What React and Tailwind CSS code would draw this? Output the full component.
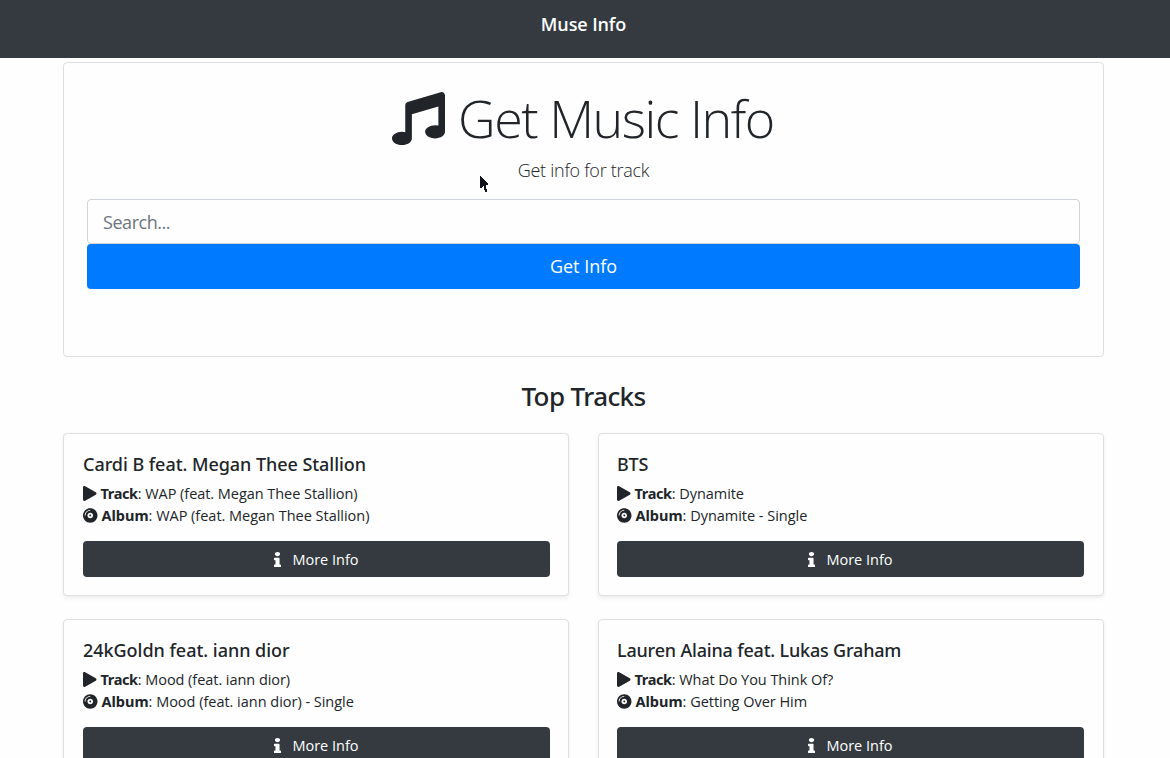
import { FaCompactDisc, FaInfo, FaMusic, FaPlay } from "react-icons/fa";

const tracks = [
  {
    artist: "Cardi B feat. Megan Thee Stallion",
    track: "WAP (feat. Megan Thee Stallion)",
    album: "WAP (feat. Megan Thee Stallion)",
    tracking: "tracking-[-0.05px]",
  },
  { artist: "BTS", track: "Dynamite", album: "Dynamite - Single", tracking: "tracking-[-0.2px]" },
  {
    artist: "24kGoldn feat. iann dior",
    track: "Mood (feat. iann dior)",
    album: "Mood (feat. iann dior) - Single",
    tracking: "tracking-[-0.03px]",
  },
  {
    artist: "Lauren Alaina feat. Lukas Graham",
    track: "What Do You Think Of?",
    album: "Getting Over Him",
    tracking: "tracking-[-0.19px]",
  },
];

function TrackCard({ artist, track, album, tracking }) {
  return (
    <article className="h-[163px] rounded-[4px] border border-[#dfdfdf] bg-[#fefefe] px-[19px] pt-[19px] shadow-[0_2px_4px_rgba(0,0,0,0.075)] even:pl-[18px]">
      <h5
        className={`mb-[7px] h-[22px] font-['Noto_Sans',sans-serif] text-[18px] leading-[22px] font-medium whitespace-nowrap ${tracking}`}
      >
        {artist}
      </h5>
      <div className="mb-[15px] text-[14.5px] leading-[22px] whitespace-nowrap">
        <p className="flex h-[22px] items-center">
          <FaPlay className="mr-[4px] h-[15px] w-[13.5px]" preserveAspectRatio="none" />
          <strong className="font-['Noto_Sans',sans-serif] font-bold tracking-[-0.35px]">Track</strong>
          <span className="pt-[2px] tracking-[-0.05px]">: {track}</span>
        </p>
        <p className="flex h-[22px] items-center">
          <FaCompactDisc className="mr-[4px] h-[15px] w-[14.5px]" />
          <strong className="font-['Noto_Sans',sans-serif] font-bold">Album</strong>
          <span className="pt-[2px] tracking-[-0.02px]">: {album}</span>
        </p>
      </div>
      <button className="flex h-[36px] w-[467px] items-center justify-center rounded-[4px] bg-[#343a40] text-[14.5px] text-white">
        <FaInfo className="mr-[11px] h-[15px] w-[7px]" preserveAspectRatio="none" />
        <span className="pt-[2px]">More Info</span>
      </button>
    </article>
  );
}

function Cursor() {
  return (
    <svg
      className="absolute top-[175px] left-[479px] h-[18px] w-[11px]"
      viewBox="0 0 11 18"
      fill="#10131a"
      shapeRendering="crispEdges"
      aria-hidden="true"
    >
      <path d="M1 1v12h1l2-2 1 1v2l1 2v1h2v-2l-1-2v-2l-1-1h3V9z" />
    </svg>
  );
}

export default function App() {
  return (
    <div className="relative h-[758px] overflow-hidden bg-[#fefefe] font-['Open_Sans',sans-serif] text-[#212529]">
      <nav className="flex h-[58px] justify-center bg-[#343a40] pt-[12px] pr-[3px]">
        <span className="text-[18px] leading-[25px] font-semibold tracking-[-0.1px] text-white">Muse Info</span>
      </nav>

      <main className="mt-[4px] ml-[63px] w-[1041px]">
        <section className="h-[295px] rounded-[4px] border border-[#dfdfdf] px-[23px] pt-[22px] text-center">
          <h1 className="flex h-[66px] items-center justify-center pr-px text-[52px] leading-[66px] font-light tracking-[-1.5px]">
            <FaMusic className="mr-[13px] h-[53px] w-[53px]" />
            Get Music Info
          </h1>
          <p className="mt-[6px] mb-[15px] h-[27px] text-[18px] leading-[27px] font-light tracking-[-0.27px]">
            Get info for track
          </p>
          <input
            className="block h-[45px] w-full rounded-[4px] border border-[#ced4da] bg-[#fefefe] px-[15px] text-[18px] tracking-[-0.45px] placeholder:text-[#6c757d]"
            placeholder="Search..."
          />
          <button className="block h-[45px] w-full rounded-[4px] bg-[#007bff] text-[18px] text-white">Get Info</button>
        </section>

        <h2 className="mt-[23px] mb-[21px] h-[32px] text-center font-['Noto_Sans',sans-serif] text-[26px] leading-[32px] font-medium tracking-[-0.6px]">
          Top Tracks
        </h2>

        <div className="grid grid-cols-2 gap-x-[29px] gap-y-[23px]">
          {tracks.map((item) => (
            <TrackCard key={item.artist} {...item} />
          ))}
        </div>
      </main>

      <Cursor />
    </div>
  );
}
